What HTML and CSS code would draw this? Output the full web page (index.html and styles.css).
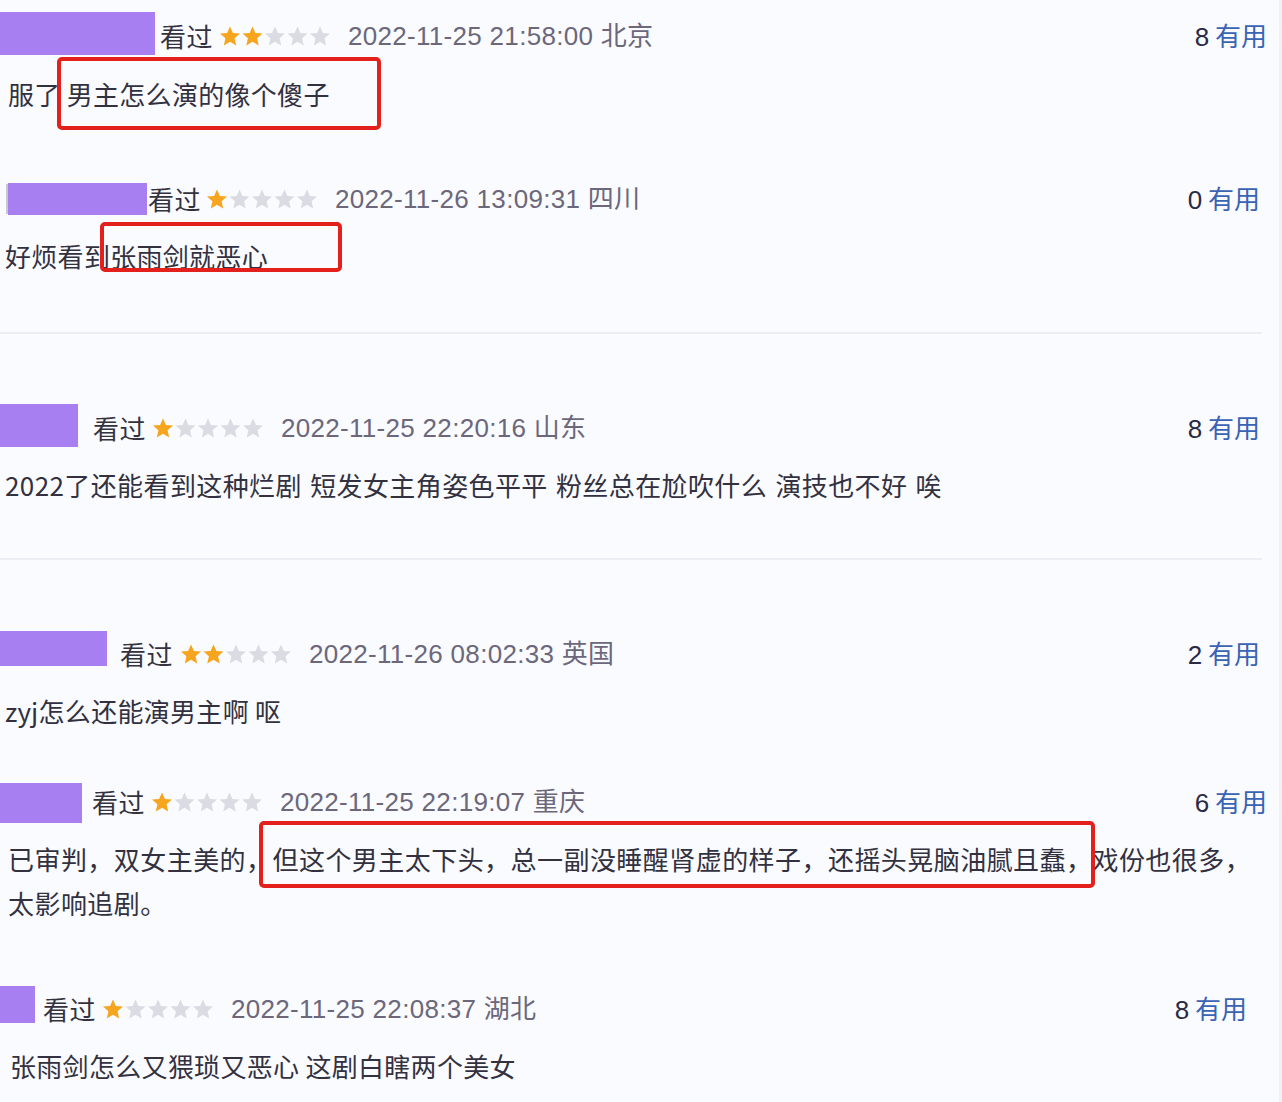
FILE: index.html
```html
<!DOCTYPE html>
<html lang="zh-CN">
<head>
<meta charset="utf-8">
<title>短评</title>
<link rel="stylesheet" href="styles.css">
</head>
<body>
<svg width="0" height="0" class="defs" aria-hidden="true">
  <defs>
    <polygon id="star" points="10,0.5 12.9,7 20,7.6 14.6,12.2 16.2,19.5 10,15.7 3.8,19.5 5.4,12.2 0,7.6 7.1,7"/>
  </defs>
</svg>
<div class="page">

  <div class="c b1">
    <div class="head">
      <span class="mask"></span>
      <span class="watched">看过</span>
      <svg class="stars" viewBox="0 0 112 20" width="112" height="20"><use href="#star" x="0" class="on"/><use href="#star" x="22.5" class="on"/><use href="#star" x="45" class="off"/><use href="#star" x="67.5" class="off"/><use href="#star" x="90" class="off"/></svg>
      <span class="date">2022-11-25 21:58:00 北京</span>
      <span class="useful"><span class="num">8</span> 有用</span>
    </div>
    <p class="text">服了 男主怎么演的像个傻子</p>
    <div class="mark"></div>
  </div>

  <div class="c b2">
    <div class="head">
      <span class="mask"></span>
      <span class="watched">看过</span>
      <svg class="stars" viewBox="0 0 112 20" width="112" height="20"><use href="#star" x="0" class="on"/><use href="#star" x="22.5" class="off"/><use href="#star" x="45" class="off"/><use href="#star" x="67.5" class="off"/><use href="#star" x="90" class="off"/></svg>
      <span class="date">2022-11-26 13:09:31 四川</span>
      <span class="useful"><span class="num">0</span> 有用</span>
    </div>
    <p class="text">好烦看到张雨剑就恶心</p>
    <div class="mark"></div>
  </div>

  <hr class="sep sep1">

  <div class="c b3">
    <div class="head">
      <span class="mask"></span>
      <span class="watched">看过</span>
      <svg class="stars" viewBox="0 0 112 20" width="112" height="20"><use href="#star" x="0" class="on"/><use href="#star" x="22.5" class="off"/><use href="#star" x="45" class="off"/><use href="#star" x="67.5" class="off"/><use href="#star" x="90" class="off"/></svg>
      <span class="date">2022-11-25 22:20:16 山东</span>
      <span class="useful"><span class="num">8</span> 有用</span>
    </div>
    <p class="text">2022了还能看到这种烂剧 短发女主角姿色平平 粉丝总在尬吹什么 演技也不好 唉</p>
  </div>

  <hr class="sep sep2">

  <div class="c b4">
    <div class="head">
      <span class="mask"></span>
      <span class="watched">看过</span>
      <svg class="stars" viewBox="0 0 112 20" width="112" height="20"><use href="#star" x="0" class="on"/><use href="#star" x="22.5" class="on"/><use href="#star" x="45" class="off"/><use href="#star" x="67.5" class="off"/><use href="#star" x="90" class="off"/></svg>
      <span class="date">2022-11-26 08:02:33 英国</span>
      <span class="useful"><span class="num">2</span> 有用</span>
    </div>
    <p class="text">zyj怎么还能演男主啊 呕</p>
  </div>

  <div class="c b5">
    <div class="head">
      <span class="mask"></span>
      <span class="watched">看过</span>
      <svg class="stars" viewBox="0 0 112 20" width="112" height="20"><use href="#star" x="0" class="on"/><use href="#star" x="22.5" class="off"/><use href="#star" x="45" class="off"/><use href="#star" x="67.5" class="off"/><use href="#star" x="90" class="off"/></svg>
      <span class="date">2022-11-25 22:19:07 重庆</span>
      <span class="useful"><span class="num">6</span> 有用</span>
    </div>
    <p class="text long">已审判，双女主美的，但这个男主太下头，总一副没睡醒肾虚的样子，还摇头晃脑油腻且蠢，戏份也很多，太影响追剧。</p>
    <div class="mark"></div>
  </div>

  <div class="c b6">
    <div class="head">
      <span class="mask"></span>
      <span class="watched">看过</span>
      <svg class="stars" viewBox="0 0 112 20" width="112" height="20"><use href="#star" x="0" class="on"/><use href="#star" x="22.5" class="off"/><use href="#star" x="45" class="off"/><use href="#star" x="67.5" class="off"/><use href="#star" x="90" class="off"/></svg>
      <span class="date">2022-11-25 22:08:37 湖北</span>
      <span class="useful"><span class="num">8</span> 有用</span>
    </div>
    <p class="text">张雨剑怎么又猥琐又恶心 这剧白瞎两个美女</p>
  </div>

</div>
</body>
</html>
```

FILE: styles.css
```css
html, body {
  margin: 0;
  padding: 0;
}
body {
  background: #f9fbfe;
  font-family: "Noto Sans CJK SC", "Noto Sans", sans-serif;
  color: #2c2a38;
}
.defs {
  position: absolute;
  width: 0;
  height: 0;
}
.page {
  width: 1282px;
  height: 1102px;
  overflow: hidden;
  box-sizing: border-box;
  border-right: 3px solid #eef1f6;
  display: flex;
  flex-direction: column;
}
.c {
  position: relative;
  display: flex;
  flex-direction: column;
}
.head {
  height: 48px;
  display: flex;
  align-items: center;
  font-size: 26px;
  line-height: 48px;
  white-space: nowrap;
}
.mask {
  align-self: flex-start;
  background: #a77ff0;
  flex: none;
}
.watched {
  color: #34323f;
  letter-spacing: 0.5px;
}
.stars {
  margin-left: 7px;
  flex: none;
}
.stars .on { fill: #f7a51e; }
.stars .off { fill: #d9dce2; }
.date {
  margin-left: 16px;
  font-family: "Liberation Sans", "Noto Sans CJK SC", sans-serif;
  color: #6c677b;
  font-size: 26px;
  letter-spacing: 0.3px;
}
.useful {
  margin-left: auto;
  color: #3a63b4;
}
.useful .num {
  font-family: "Liberation Sans", sans-serif;
  color: #2b2a44;
}
.text {
  margin: 0;
  font-size: 26px;
  line-height: 36px;
  letter-spacing: 0.3px;
  color: #33313f;
  white-space: nowrap;
}
.text.long {
  white-space: normal;
  width: 1262px;
  line-height: 44px;
  letter-spacing: 0.45px;
}
.mark {
  position: absolute;
  border: 4px solid #e3201c;
  border-radius: 5px;
  box-sizing: border-box;
}
.sep {
  margin: 0;
  border: 0;
  height: 2px;
  width: 1262px;
  background: #ebeff5;
}

/* block 1 */
.b1 { margin-top: 12px; padding-right: 12px; }
.b1 .mask { width: 155px; height: 43px; margin-right: 5px; }
.b1 .text { margin-top: 16px; padding-left: 8px; }
.b1 .mark { left: 57px; top: 45px; width: 324px; height: 73px; }

/* block 2 */
.b2 { margin-top: 63px; padding-right: 19px; }
.b2 .mask { width: 139px; height: 32px; margin-top: 8px; margin-left: 8px; margin-right: 1px; box-shadow: -3px 0 0 -1px #c9c8d0; }
.b2 .stars { margin-left: 6px; }
.b2 .text { margin-top: 15px; padding-left: 5px; }
.b2 .mark { left: 100px; top: 47px; width: 242px; height: 50px; }

.sep1 { margin-top: 58px; }

/* block 3 */
.b3 { margin-top: 70px; padding-right: 19px; }
.b3 .mask { width: 78px; height: 43px; margin-right: 15px; }
.b3 .text { margin-top: 15px; padding-left: 5px; letter-spacing: 0.4px; word-spacing: 2px; }

.sep2 { margin-top: 55px; }

/* block 4 */
.b4 { margin-top: 70px; padding-right: 19px; }
.b4 .mask { width: 107px; height: 35px; margin-top: 1px; margin-right: 13px; }
.b4 .stars { margin-left: 8px; }
.b4 .text { margin-top: 15px; padding-left: 5px; }

/* block 5 */
.b5 { margin-top: 49px; padding-right: 12px; }
.b5 .mask { width: 82px; height: 40px; margin-top: 5px; margin-right: 10px; }
.b5 .text { margin-top: 11px; padding-left: 8px; }
.b5 .mark { left: 259px; top: 43px; width: 836px; height: 67px; }

/* block 6 */
.b6 { margin-top: 60px; padding-right: 32px; }
.b6 .mask { width: 35px; height: 37px; margin-top: 1px; margin-right: 8px; }
.b6 .text { margin-top: 15px; padding-left: 10px; }
```
